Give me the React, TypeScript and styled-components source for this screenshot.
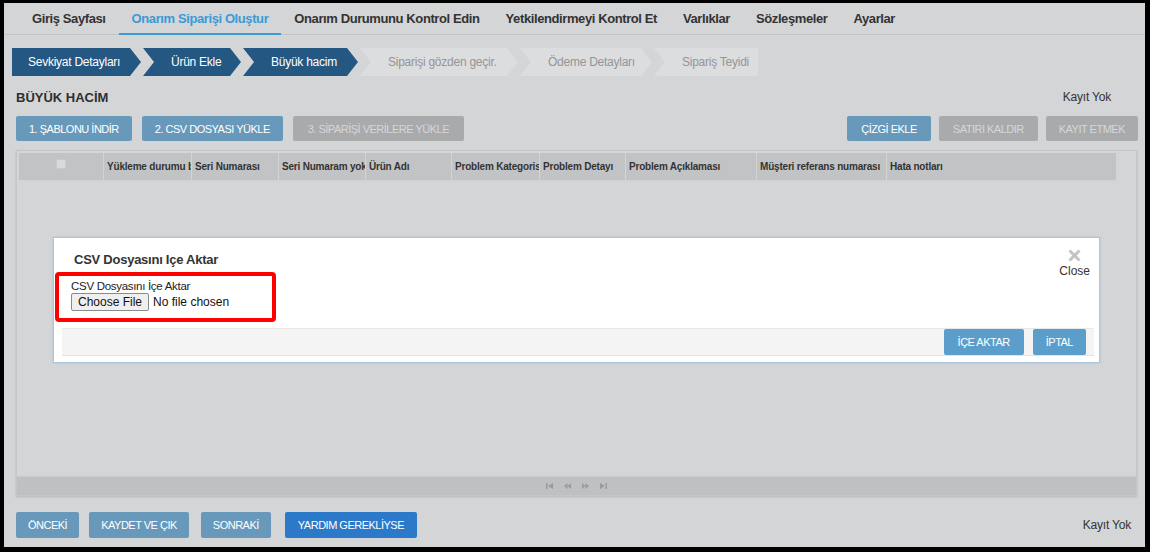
import React from "react";
import styled, { createGlobalStyle } from "styled-components";

const GlobalStyle = createGlobalStyle`
  html, body { margin: 0; padding: 0; background: #000; }
  body { font-family: "Liberation Sans", Arial, sans-serif; }
  * { box-sizing: border-box; }
`;

const Frame = styled.div`
  width: 1150px;
  height: 552px;
  border-style: solid;
  border-color: #000;
  border-width: 3px 5px 5px 4px;
  background: #d4d5d7;
  display: flex;
  flex-direction: column;
  font-family: "Liberation Sans", Arial, sans-serif;
  color: #333;
  overflow: hidden;
`;

const NavBar = styled.nav`
  height: 32px;
  flex: none;
  display: flex;
  align-items: stretch;
  padding-left: 15px;
  border-bottom: 1px solid #c3c4c6;
`;

const NavItem = styled.a<{ $active?: boolean }>`
  display: flex;
  align-items: center;
  padding: 0 13px;
  font-size: 13px;
  font-weight: bold;
  letter-spacing: -0.4px;
  color: ${(p) => (p.$active ? "#3b9ad6" : "#333")};
  border-bottom: 2px solid ${(p) => (p.$active ? "#3b9ad6" : "transparent")};
  margin-bottom: -1px;
  padding-top: 1px;
  white-space: nowrap;
`;

const Steps = styled.div`
  margin-top: 13px;
  padding-left: 8px;
  display: flex;
  gap: 2px;
  height: 28px;
  flex: none;
`;

const Step = styled.div<{ $active?: boolean; $first?: boolean; $last?: boolean; $w: number }>`
  width: ${(p) => p.$w}px;
  flex: none;
  height: 28px;
  display: flex;
  align-items: center;
  font-size: 12px;
  letter-spacing: -0.25px;
  white-space: nowrap;
  overflow: hidden;
  background: ${(p) => (p.$active ? "#245782" : "#dcdddf")};
  color: ${(p) => (p.$active ? "#fff" : "#959596")};
  padding-left: ${(p) => (p.$first ? "16px" : "28px")};
  clip-path: ${(p) => {
    const notch = p.$first ? "" : ", 11px 50%";
    const right = p.$last
      ? "100% 0, 100% 100%"
      : "calc(100% - 11px) 0, 100% 50%, calc(100% - 11px) 100%";
    return `polygon(0 0, ${right}, 0 100%${notch})`;
  }};
`;

const TitleRow = styled.div`
  margin-top: 11px;
  height: 20px;
  flex: none;
  display: flex;
  align-items: center;
  justify-content: space-between;
  padding: 0 34px 0 12px;
`;

const PageTitle = styled.h1`
  margin: 0;
  font-size: 13px;
  font-weight: bold;
  color: #2f2f2f;
`;

const Count = styled.span`
  font-size: 12px;
  letter-spacing: -0.2px;
  color: #333;
`;

const Toolbar = styled.div`
  margin-top: 9px;
  height: 25px;
  flex: none;
  display: flex;
  justify-content: space-between;
  padding: 0 7px 0 12px;
`;

const ButtonGroup = styled.div<{ $gap: number }>`
  display: flex;
  gap: ${(p) => p.$gap}px;
`;

const Button = styled.button<{
  $variant: "blue" | "gray" | "bright" | "modal";
  $h?: number;
  $pad?: number;
}>`
  height: ${(p) => p.$h ?? 25}px;
  padding: 0 ${(p) => p.$pad ?? 13}px;
  border: none;
  border-radius: 2px;
  font-family: "Liberation Sans", Arial, sans-serif;
  font-size: 11px;
  letter-spacing: -0.5px;
  white-space: nowrap;
  background: ${(p) =>
    p.$variant === "blue"
      ? "#6899bb"
      : p.$variant === "bright"
      ? "#2b79c8"
      : p.$variant === "modal"
      ? "#5c9ecb"
      : "#a9aaac"};
  color: ${(p) => (p.$variant === "gray" ? "#d6d7d8" : "#fff")};
`;

const TableWrap = styled.div`
  position: relative;
  margin: 9px 0 0 12px;
  width: 1121px;
  height: 346px;
  flex: none;
  border: 1px solid #c5c6c8;
  box-shadow: 0 1px 2px rgba(0, 0, 0, 0.15);
  display: flex;
  flex-direction: column;
`;

const HeaderRow = styled.div`
  margin: 2px 19px 0 2px;
  height: 28px;
  display: grid;
  grid-template-columns: 85px 88px 87px 87px 86px 88px 86px 131px 130px 1fr;
  background: #c2c3c5;
  border-bottom: 1px solid #d0d1d3;
`;

const HeaderCell = styled.div`
  display: flex;
  align-items: center;
  padding-left: 3px;
  font-size: 10px;
  font-weight: bold;
  letter-spacing: -0.2px;
  color: #333;
  white-space: nowrap;
  overflow: hidden;
  text-overflow: clip;
  border-right: 1px solid #d3d4d6;
`;

const CheckCell = styled(HeaderCell)`
  justify-content: center;
  padding: 0 0 6px 0;
`;

const Check = styled.span`
  width: 10px;
  height: 10px;
  border: 1px solid #c9cacc;
  background: #d9dadc;
  border-radius: 1px;
`;

const TableBody = styled.div`
  flex: 1;
`;

const Pager = styled.div`
  height: 19px;
  background: #bfc0c2;
  border-top: 1px solid #c9cacc;
  display: flex;
  align-items: center;
  justify-content: center;
  gap: 11px;
`;

const PagerIcon = styled.svg`
  width: 7px;
  height: 6px;
  fill: #9a9b9d;
`;

const Modal = styled.div`
  position: absolute;
  left: 36px;
  top: 86px;
  width: 1047px;
  height: 126px;
  background: #fff;
  border: 1px solid #a9c5df;
  box-shadow: 0 0 2px rgba(120, 160, 200, 0.4);
  display: flex;
  flex-direction: column;
`;

const ModalHeader = styled.div`
  height: 34px;
  display: flex;
  justify-content: space-between;
  align-items: flex-start;
  padding: 0 9px 0 20px;
`;

const ModalTitle = styled.h2`
  margin: 14px 0 0;
  font-size: 13px;
  font-weight: bold;
  letter-spacing: -0.25px;
  color: #333;
`;

const CloseBox = styled.div`
  margin-top: 11px;
  display: flex;
  flex-direction: column;
  align-items: center;
  position: relative;
  z-index: 1;
`;

const CloseX = styled.svg`
  width: 13px;
  height: 13px;
  stroke: #c4c4c4;
  stroke-width: 3;
`;

const CloseText = styled.span`
  font-size: 12px;
  color: #333;
  margin-top: 2px;
`;

const Highlight = styled.div`
  margin-left: 1px;
  width: 221px;
  height: 50px;
  border: 4px solid #ff0000;
  border-radius: 4px;
  padding: 3px 0 0 12px;
  display: flex;
  flex-direction: column;
`;

const FieldLabel = styled.label`
  font-size: 11.5px;
  letter-spacing: -0.3px;
  line-height: 14px;
  color: #222;
`;

const FileInput = styled.input`
  font-family: "Liberation Sans", Arial, sans-serif;
  font-size: 12px;
  color: #111;
  height: 18px;
  &::file-selector-button {
    font-family: "Liberation Sans", Arial, sans-serif;
    font-size: 12px;
    height: 18px;
    padding: 0 6px;
    margin-right: 4px;
    border: 1px solid #8a8a8a;
    border-radius: 2px;
    background: #efefef;
    color: #111;
  }
`;

const ModalFooter = styled.div`
  margin: 6px 5px 0 8px;
  height: 28px;
  background: #f4f4f4;
  border-top: 1px solid #e8e8e8;
  border-bottom: 1px solid #e4e4e4;
  display: flex;
  align-items: center;
  justify-content: flex-end;
  gap: 9px;
  padding-right: 8px;
`;

const BottomBar = styled.div`
  margin-top: 16px;
  height: 26px;
  flex: none;
  display: flex;
  align-items: center;
  justify-content: space-between;
  padding: 0 14px 0 12px;
`;

const BottomGroup = styled.div`
  display: flex;
  gap: 10px;
  & > :nth-child(3) { margin-left: 2px; }
  & > :nth-child(4) { margin-left: 4px; }
`;

const navItems = [
  "Giriş Sayfası",
  "Onarım Siparişi Oluştur",
  "Onarım Durumunu Kontrol Edin",
  "Yetkilendirmeyi Kontrol Et",
  "Varlıklar",
  "Sözleşmeler",
  "Ayarlar",
];

const steps = [
  { label: "Sevkiyat Detayları", active: true, w: 129 },
  { label: "Ürün Ekle", active: true, w: 98 },
  { label: "Büyük hacim", active: true, w: 115 },
  { label: "Siparişi gözden geçir.", active: false, w: 158 },
  { label: "Ödeme Detayları", active: false, w: 132 },
  { label: "Sipariş Teyidi", active: false, w: 104 },
];

const columns = [
  "Yükleme durumu bilgisi",
  "Seri Numarası",
  "Seri Numaram yok",
  "Ürün Adı",
  "Problem Kategorisi",
  "Problem Detayı",
  "Problem Açıklaması",
  "Müşteri referans numarası",
  "Hata notları",
];

const First = () => (
  <PagerIcon viewBox="0 0 7 6">
    <rect x="0" y="0" width="1.5" height="6" />
    <polygon points="7,0 7,6 2,3" />
  </PagerIcon>
);
const Prev = () => (
  <PagerIcon viewBox="0 0 7 6">
    <polygon points="3.5,0 3.5,6 0,3" />
    <polygon points="7,0 7,6 3.5,3" />
  </PagerIcon>
);
const Next = () => (
  <PagerIcon viewBox="0 0 7 6">
    <polygon points="0,0 0,6 3.5,3" />
    <polygon points="3.5,0 3.5,6 7,3" />
  </PagerIcon>
);
const Last = () => (
  <PagerIcon viewBox="0 0 7 6">
    <polygon points="0,0 0,6 5,3" />
    <rect x="5.5" y="0" width="1.5" height="6" />
  </PagerIcon>
);

export default function App() {
  return (
    <>
      <GlobalStyle />
      <Frame>
        <NavBar>
          {navItems.map((n, i) => (
            <NavItem key={n} $active={i === 1}>
              {n}
            </NavItem>
          ))}
        </NavBar>

        <Steps>
          {steps.map((s, i) => (
            <Step
              key={s.label}
              $w={s.w}
              $active={s.active}
              $first={i === 0}
              $last={i === steps.length - 1}
            >
              {s.label}
            </Step>
          ))}
        </Steps>

        <TitleRow>
          <PageTitle>BÜYÜK HACİM</PageTitle>
          <Count>Kayıt Yok</Count>
        </TitleRow>

        <Toolbar>
          <ButtonGroup $gap={10}>
            <Button $variant="blue">1. ŞABLONU İNDİR</Button>
            <Button $variant="blue">2. CSV DOSYASI YÜKLE</Button>
            <Button $variant="gray" $pad={15}>3. SİPARİŞİ VERİLERE YÜKLE</Button>
          </ButtonGroup>
          <ButtonGroup $gap={8}>
            <Button $variant="blue" $pad={14}>ÇİZGİ EKLE</Button>
            <Button $variant="gray" $pad={14}>SATIRI KALDIR</Button>
            <Button $variant="gray" $pad={13}>KAYIT ETMEK</Button>
          </ButtonGroup>
        </Toolbar>

        <TableWrap>
          <HeaderRow>
            <CheckCell>
              <Check />
            </CheckCell>
            {columns.map((c) => (
              <HeaderCell key={c}>{c}</HeaderCell>
            ))}
          </HeaderRow>
          <TableBody />
          <Pager>
            <First />
            <Prev />
            <Next />
            <Last />
          </Pager>

          <Modal>
            <ModalHeader>
              <ModalTitle>CSV Dosyasını Içe Aktar</ModalTitle>
              <CloseBox>
                <CloseX viewBox="0 0 13 13">
                  <line x1="1.5" y1="1.5" x2="11.5" y2="11.5" />
                  <line x1="11.5" y1="1.5" x2="1.5" y2="11.5" />
                </CloseX>
                <CloseText>Close</CloseText>
              </CloseBox>
            </ModalHeader>
            <Highlight>
              <FieldLabel htmlFor="csv">CSV Dosyasını İçe Aktar</FieldLabel>
              <FileInput id="csv" type="file" />
            </Highlight>
            <ModalFooter>
              <Button $variant="modal" $h={26} $pad={14}>İÇE AKTAR</Button>
              <Button $variant="modal" $h={26} $pad={13}>İPTAL</Button>
            </ModalFooter>
          </Modal>
        </TableWrap>

        <BottomBar>
          <BottomGroup>
            <Button $variant="blue" $h={26} $pad={12}>ÖNCEKİ</Button>
            <Button $variant="blue" $h={26} $pad={12}>KAYDET VE ÇIK</Button>
            <Button $variant="blue" $h={26} $pad={12}>SONRAKİ</Button>
            <Button $variant="bright" $h={26} $pad={13}>YARDIM GEREKLİYSE</Button>
          </BottomGroup>
          <Count>Kayıt Yok</Count>
        </BottomBar>
      </Frame>
    </>
  );
}
